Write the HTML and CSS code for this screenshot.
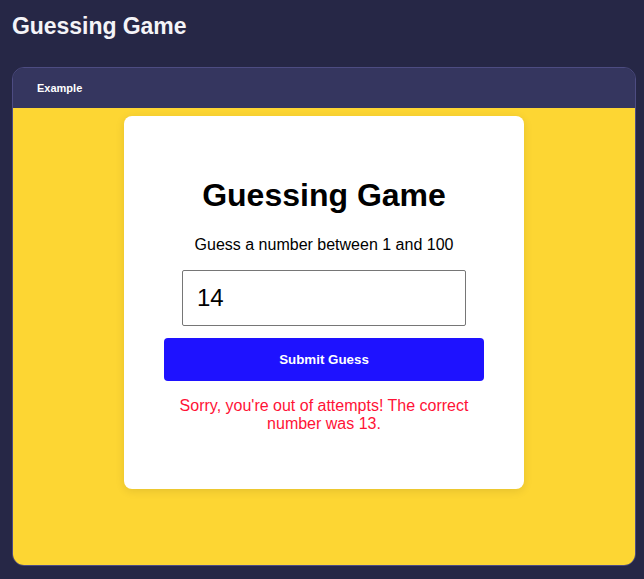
FILE: index.html
```html
<!DOCTYPE html>
<html>
<head>
<meta charset="utf-8">
<link rel="stylesheet" href="styles.css">
</head>
<body>
<h1 class="page-title">Guessing Game</h1>
<div class="panel">
  <div class="panel-header">Example</div>
  <div class="panel-body">
    <div class="card">
      <h1 class="game-title">Guessing Game</h1>
      <p class="prompt">Guess a number between 1 and 100</p>
      <input class="guess-input" type="text" value="14">
      <button class="submit-btn">Submit Guess</button>
      <p class="message">Sorry, you're out of attempts! The correct number was 13.</p>
    </div>
  </div>
</div>
</body>
</html>
```
FILE: styles.css
```css
html, body {
  margin: 0;
  background: #262746;
}
body {
  padding: 12px 8px 0 12px;
  font-family: "Liberation Sans", Arial, sans-serif;
  height: 579px;
  box-sizing: border-box;
  overflow: hidden;
}
.page-title {
  margin: 0;
  font-size: 23px;
  line-height: 28px;
  font-weight: bold;
  color: #f4f4f8;
  letter-spacing: -0.05px;
}
.panel {
  margin-top: 27px;
  border: 1px solid #4d4c82;
  border-radius: 12px;
  overflow: hidden;
}
.panel-header {
  height: 40px;
  background: #35365f;
  color: #ffffff;
  font-size: 11px;
  font-weight: bold;
  line-height: 40px;
  padding-left: 24px;
}
.panel-body {
  background: #fdd633;
  height: 457px;
  box-sizing: border-box;
  padding-top: 8px;
  display: flex;
  justify-content: center;
  align-items: flex-start;
}
.card {
  width: 400px;
  height: 373px;
  box-sizing: border-box;
  background: #ffffff;
  border-radius: 8px;
  padding: 40px;
  box-shadow: 0 2px 10px rgba(0, 0, 0, 0.1);
  display: flex;
  flex-direction: column;
  align-items: center;
  text-align: center;
}
.game-title {
  font-size: 32px;
  font-weight: bold;
  margin: 21px 0 22px;
  line-height: 37px;
  color: #000;
}
.prompt {
  margin: 0 0 16px;
  font-size: 16px;
  line-height: 18px;
  color: #000;
}
.guess-input {
  width: 284px;
  height: 56px;
  box-sizing: border-box;
  border: 1px solid #767676;
  border-radius: 2px;
  padding: 0 14px;
  font-family: "Liberation Sans", Arial, sans-serif;
  font-size: 24px;
  color: #000;
  margin: 0;
}
.submit-btn {
  margin-top: 12px;
  width: 320px;
  height: 43px;
  border: none;
  border-radius: 4px;
  background: #1e12ff;
  color: #ffffff;
  font-family: "Liberation Sans", Arial, sans-serif;
  font-size: 13.333px;
  font-weight: bold;
}
.message {
  margin: 16px 0 0;
  width: 320px;
  font-size: 16px;
  line-height: 18px;
  color: #ff1236;
}
```
